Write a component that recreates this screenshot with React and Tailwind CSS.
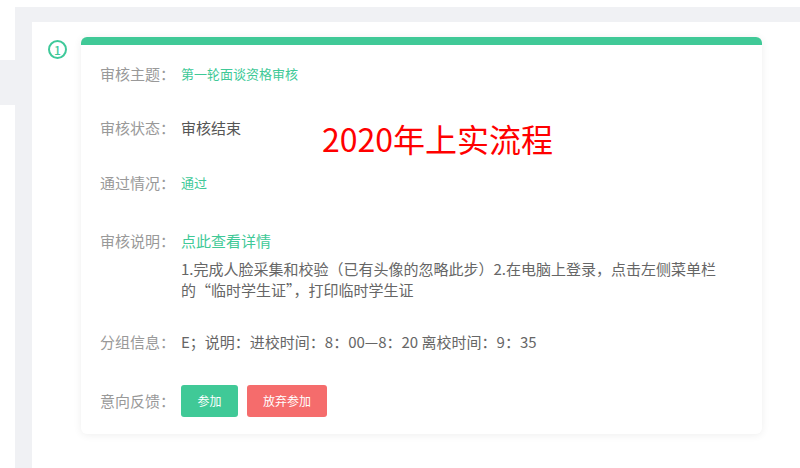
const font = { fontFamily: '"Microsoft YaHei", "Noto Sans CJK SC", "Noto Sans", sans-serif' };

function Row({ label, children, className = '' }) {
  return (
    <div className={`flex items-center h-[22px] ${className}`}>
      <span className="w-[81px] shrink-0 text-[15px] text-[#999]">{label}</span>
      {children}
    </div>
  );
}

export default function App() {
  return (
    <div className="w-[800px] h-[468px] flex bg-white overflow-hidden" style={font}>
      {/* side rail */}
      <div className="w-[15px] shrink-0 bg-white">
        <div className="mt-[60px] h-[45px] bg-[#f0f1f4]" />
      </div>

      <div className="flex-1 flex flex-col">
        <div className="h-[7px] bg-white" />
        <div className="flex-1 bg-[#f0f1f4] pt-[15px] pl-[17px]">
          <div className="relative h-full bg-white pt-[15px] flex">
            <div className="w-[49px] shrink-0 pl-[16px] pt-[3px]">
              <div className="w-[19px] h-[19px] rounded-full border-2 border-[#3fc99a] flex items-center justify-center text-[12px] leading-none font-medium text-[#3fc99a]">
                1
              </div>
            </div>

            <div className="w-[681px] h-[397px] rounded-[6px] bg-white shadow-[0_1px_8px_rgba(0,0,0,0.07)] flex flex-col">
              <div className="h-[8px] rounded-t-[6px] bg-[#40c997]" />
              <div className="pl-[19px] pt-[18px]">
                <Row label="审核主题：">
                  <span className="text-[13px] text-[#40c997]">第一轮面谈资格审核</span>
                </Row>
                <Row label="审核状态：" className="mt-[32px]">
                  <span className="text-[15px] text-[#555]">审核结束</span>
                </Row>
                <Row label="通过情况：" className="mt-[33px]">
                  <span className="text-[13px] text-[#40c997]">通过</span>
                </Row>
                <Row label="审核说明：" className="mt-[36px]">
                  <span className="text-[15px] text-[#40c997] cursor-pointer">点此查看详情</span>
                </Row>
                <p className="mt-[6px] ml-[81px] w-[560px] text-[15px] leading-[21px] text-[#666]">
                  1.完成人脸采集和校验（已有头像的忽略此步）2.在电脑上登录，点击左侧菜单栏的“临时学生证”，打印临时学生证
                </p>
                <Row label="分组信息：" className="mt-[31px]">
                  <span className="text-[15px] text-[#666]">E；说明：进校时间：8：00—8：20 离校时间：9：35</span>
                </Row>
                <div className="flex items-center mt-[32px]">
                  <span className="w-[81px] shrink-0 text-[15px] text-[#999]">意向反馈：</span>
                  <button className="w-[57px] h-[32px] rounded-[3px] bg-[#40c997] text-white text-[12px]">参加</button>
                  <button className="ml-[9px] w-[80px] h-[32px] rounded-[3px] bg-[#f56c6c] text-white text-[12px]">放弃参加</button>
                </div>
              </div>
            </div>

            <div className="absolute left-[290px] top-[96px] text-[32px] leading-[40px] text-[#ff0000]">
              2020年上实流程
            </div>
          </div>
        </div>
      </div>
    </div>
  );
}
